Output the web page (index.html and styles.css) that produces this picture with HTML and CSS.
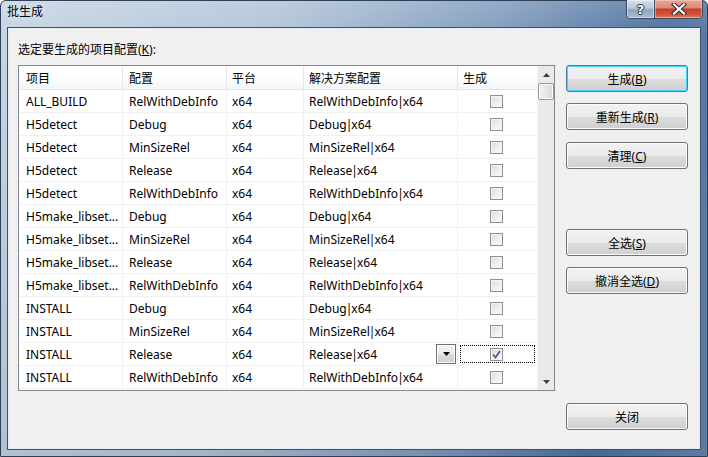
FILE: index.html
```html
<!DOCTYPE html>
<html lang="zh-CN">
<head>
  <meta charset="UTF-8">
  <title>批生成</title>
  <link rel="stylesheet" href="styles.css">
</head>
<body>

  <div class="window">

    <!-- Title bar -->
    <div class="titlebar">
      <span class="title">批生成</span>
      <div class="caption-buttons">
        <div class="cap-help">?</div>
        <div class="cap-close">
          <svg width="16" height="12" viewBox="0 0 16 12">
            <path d="M3 1.5 L13 10.5 M13 1.5 L3 10.5" stroke="#2d2d2d" stroke-width="4.2" stroke-linecap="square"/>
            <path d="M3 1.5 L13 10.5 M13 1.5 L3 10.5" stroke="#ffffff" stroke-width="2.2" stroke-linecap="square"/>
          </svg>
        </div>
      </div>
    </div>

    <!-- Client area -->
    <div class="client">
      <div class="left-pane">
        <div class="prompt">选定要生成的项目配置(<u>K</u>):</div>

        <div class="listbox">
          <div class="grid">
            <div class="row head">
              <div class="cell c1">项目</div>
              <div class="cell c2">配置</div>
              <div class="cell c3">平台</div>
              <div class="cell c4">解决方案配置</div>
              <div class="cell c5">生成</div>
            </div>
            <div id="rows"></div>
          </div>
          <div class="scrollbar">
            <div class="sb-arrow">
              <svg width="7" height="4" viewBox="0 0 7 4"><path d="M0 4 L3.5 0 L7 4 Z" fill="#404040"/></svg>
            </div>
            <div class="sb-track">
              <div class="sb-thumb"></div>
            </div>
            <div class="sb-arrow">
              <svg width="7" height="4" viewBox="0 0 7 4"><path d="M0 0 L7 0 L3.5 4 Z" fill="#404040"/></svg>
            </div>
          </div>
        </div>
      </div>

      <div class="button-pane">
        <button class="btn default">生成(<u>B</u>)</button>
        <button class="btn">重新生成(<u>R</u>)</button>
        <button class="btn">清理(<u>C</u>)</button>
        <button class="btn group-gap">全选(<u>S</u>)</button>
        <button class="btn">撤消全选(<u>D</u>)</button>
        <button class="btn close-gap">关闭</button>
      </div>
    </div>

  </div>

  <script>
    const configs = [
      ["ALL_BUILD", "RelWithDebInfo"],
      ["H5detect", "Debug"],
      ["H5detect", "MinSizeRel"],
      ["H5detect", "Release"],
      ["H5detect", "RelWithDebInfo"],
      ["H5make_libset...", "Debug"],
      ["H5make_libset...", "MinSizeRel"],
      ["H5make_libset...", "Release"],
      ["H5make_libset...", "RelWithDebInfo"],
      ["INSTALL", "Debug"],
      ["INSTALL", "MinSizeRel"],
      ["INSTALL", "Release"],
      ["INSTALL", "RelWithDebInfo"]
    ];
    const selectedRow = 11;

    const rows = document.getElementById('rows');
    configs.forEach((item, i) => {
      const row = document.createElement('div');
      row.className = 'row';
      const active = i === selectedRow;
      row.innerHTML =
        '<div class="cell c1">' + item[0] + '</div>' +
        '<div class="cell c2">' + item[1] + '</div>' +
        '<div class="cell c3">x64</div>' +
        '<div class="cell c4">' + item[1] + '<span class="pipe">|</span>x64' +
          (active ? '<span class="drop"><svg width="7" height="4" viewBox="0 0 7 4"><path d="M0 0 L7 0 L3.5 4 Z" fill="#000"/></svg></span>' : '') +
        '</div>' +
        '<div class="cell c5' + (active ? ' focus' : '') + '">' +
          '<span class="check' + (active ? ' checked' : '') + '">' +
            (active ? '<svg width="9" height="9" viewBox="0 0 9 9"><path d="M1 4.5 L3.5 7.5 L8 1" stroke="#4a5c99" stroke-width="1.8" fill="none"/></svg>' : '') +
          '</span>' +
        '</div>';
      rows.appendChild(row);
    });
  </script>

</body>
</html>
```

FILE: styles.css
```css
* {
  box-sizing: border-box;
  margin: 0;
  padding: 0;
}

body {
  font-family: 'Noto Sans', 'Noto Sans CJK SC', sans-serif;
  font-size: 12px;
  color: #000;
  background: #fff;
}

.window {
  width: 708px;
  height: 457px;
  display: flex;
  flex-direction: column;
  border: 1px solid #2f3f55;
  border-radius: 6px 6px 0 0;
  background:
    linear-gradient(180deg, rgba(255, 255, 255, 0.15) 0%, rgba(0, 0, 0, 0) 8%, rgba(0, 0, 0, 0.08) 100%),
    linear-gradient(100deg, #c8d5e3 0%, #b3c5d9 35%, #7f9bbd 65%, #4f719d 85%, #6686ae 100%);
}

/* Title bar */
.titlebar {
  height: 26px;
  flex-shrink: 0;
  display: flex;
  justify-content: space-between;
  align-items: flex-start;
  padding-left: 6px;
}

.title {
  font-size: 12px;
  line-height: 22px;
  color: #000;
  text-shadow: 0 0 6px rgba(255, 255, 255, 0.9);
}

.caption-buttons {
  display: flex;
  margin-right: 4px;
  margin-top: -1px;
  border: 1px solid #3a4a60;
  border-top: none;
  border-radius: 0 0 5px 5px;
  overflow: hidden;
  height: 19px;
}

.cap-help {
  width: 28px;
  display: flex;
  justify-content: center;
  align-items: center;
  font-family: 'DejaVu Sans', sans-serif;
  font-weight: bold;
  font-size: 13px;
  color: #fff;
  text-shadow: 0 0 1px #222, 1px 0 0 #333, -1px 0 0 #333, 0 1px 0 #333, 0 -1px 0 #333;
  background: linear-gradient(180deg, #d7e0ea 0%, #b9c8d9 45%, #8fa6c1 55%, #a9bed5 100%);
  border-right: 1px solid #3a4a60;
  box-shadow: inset 0 0 0 1px rgba(255, 255, 255, 0.45);
}

.cap-close {
  width: 47px;
  display: flex;
  justify-content: center;
  align-items: center;
  background: linear-gradient(180deg, #e8a799 0%, #d98b7a 42%, #c4402b 52%, #d2523a 80%, #e07f5d 100%);
  box-shadow: inset 0 0 0 1px rgba(255, 220, 210, 0.45);
}

/* Client area */
.client {
  flex: 1;
  margin: 0 6px 6px 6px;
  background: #f0f0f0;
  border: 1px solid #3f5068;
  box-shadow: inset 0 0 0 1px #e6ecf3;
  display: flex;
  padding: 14px 0 0 10px;
}

.prompt {
  line-height: 16px;
  height: 16px;
}

.listbox {
  margin-top: 7px;
  width: 537px;
  height: 326px;
  border: 1px solid #828790;
  background: #fff;
  display: flex;
}

.grid {
  width: 518px;
}

.row {
  display: flex;
  height: 23px;
  border-bottom: 1px solid #f0f0f0;
}

.row.head {
  height: 24px;
  background: linear-gradient(180deg, #ffffff 0%, #ffffff 45%, #f3f4f6 100%);
  border-bottom: 1px solid #e3e5e8;
}

.cell {
  position: relative;
  display: flex;
  align-items: center;
  padding-left: 7px;
  border-right: 1px solid #f0f0f0;
  white-space: nowrap;
  overflow: hidden;
}

.row.head .cell {
  border-right: 1px solid #e3e5e8;
  padding-top: 1px;
}

.c1 { width: 104px; }
.c2 { width: 104px; padding-left: 6px; }
.c3 { width: 77px; padding-left: 5px; }
.c4 { width: 154px; padding-left: 5px; }
.c5 { width: 79px; justify-content: center; padding-left: 0; border-right: none; }

.row.head .c5 {
  justify-content: flex-start;
  padding-left: 5px;
  border-right: none;
}

.pipe {
  margin: 0 -1px;
}

.check {
  width: 13px;
  height: 13px;
  border: 1px solid #8e8f8f;
  background: linear-gradient(135deg, #dcdcdc 0%, #f0f0f0 60%, #fbfbfb 100%);
  box-shadow: inset 0 0 0 1px #f4f4f4;
  display: flex;
  align-items: center;
  justify-content: center;
  margin-left: -3px;
}

.focus {
  outline: 1px dotted #000;
  outline-offset: -3px;
}

.drop {
  position: absolute;
  right: 1px;
  top: 1px;
  width: 20px;
  height: 20px;
  border: 1px solid #707070;
  background: linear-gradient(180deg, #f2f2f2 0%, #ebebeb 50%, #dddddd 51%, #cfcfcf 100%);
  box-shadow: inset 0 0 0 1px #fcfcfc;
  display: flex;
  align-items: center;
  justify-content: center;
}

/* Scrollbar */
.scrollbar {
  width: 17px;
  display: flex;
  flex-direction: column;
  background: #eaeaea;
  border-left: 1px solid #f4f4f4;
}

.sb-arrow {
  height: 17px;
  display: flex;
  align-items: center;
  justify-content: center;
}

.sb-track {
  flex: 1;
}

.sb-thumb {
  width: 16px;
  height: 17px;
  border: 1px solid #979797;
  border-radius: 2px;
  background: linear-gradient(90deg, #f2f2f2 0%, #e6e6e6 50%, #d8d8d8 100%);
  box-shadow: inset 0 0 0 1px #fafafa;
}

/* Buttons */
.button-pane {
  display: flex;
  flex-direction: column;
  margin-left: 11px;
  padding-top: 23px;
}

.btn {
  width: 122px;
  height: 27px;
  font-family: 'Noto Sans', 'Noto Sans CJK SC', sans-serif;
  font-size: 12px;
  color: #000;
  border: 1px solid #707070;
  border-radius: 3px;
  background: linear-gradient(180deg, #f2f2f2 0%, #ebebeb 50%, #dddddd 51%, #cfcfcf 100%);
  box-shadow: inset 0 0 0 1px #fcfcfc;
  margin-bottom: 11px;
}

.btn.default {
  border-color: #3c7fb1;
  box-shadow: inset 0 0 0 1px #48d7fb;
}

.btn:nth-child(3) {
  margin-top: 1px;
}

.btn.group-gap {
  margin-top: 49px;
}

.btn.close-gap {
  margin-top: 98px;
}
```
